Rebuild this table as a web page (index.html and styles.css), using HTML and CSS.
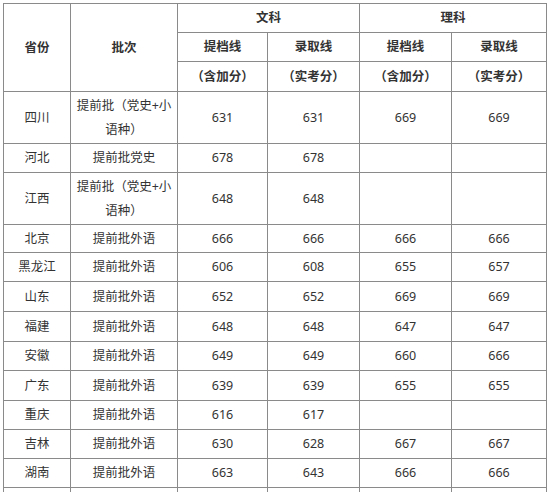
FILE: index.html
```html
<!DOCTYPE html>
<html lang="zh-CN">
<head>
<meta charset="utf-8">
<title>录取分数线</title>
<link rel="stylesheet" href="styles.css">
</head>
<body>
<table class="score-table">
  <colgroup>
    <col class="c-prov">
    <col class="c-batch">
    <col class="c-num1">
    <col class="c-num2">
    <col class="c-num3">
    <col class="c-num4">
  </colgroup>
  <thead>
    <tr class="h1">
      <th rowspan="3">省份</th>
      <th rowspan="3">批次</th>
      <th colspan="2">文科</th>
      <th colspan="2">理科</th>
    </tr>
    <tr class="h2">
      <th>提档线</th>
      <th>录取线</th>
      <th>提档线</th>
      <th>录取线</th>
    </tr>
    <tr class="h3">
      <th>（含加分）</th>
      <th>（实考分）</th>
      <th>（含加分）</th>
      <th>（实考分）</th>
    </tr>
  </thead>
  <tbody>
    <tr class="r-double"><td>四川</td><td class="batch">提前批（党史+小语种）</td><td>631</td><td>631</td><td>669</td><td>669</td></tr>
    <tr class="r29"><td>河北</td><td>提前批党史</td><td>678</td><td>678</td><td></td><td></td></tr>
    <tr class="r-double"><td>江西</td><td class="batch">提前批（党史+小语种）</td><td>648</td><td>648</td><td></td><td></td></tr>
    <tr class="r28"><td>北京</td><td>提前批外语</td><td>666</td><td>666</td><td>666</td><td>666</td></tr>
    <tr class="r29"><td>黑龙江</td><td>提前批外语</td><td>606</td><td>608</td><td>655</td><td>657</td></tr>
    <tr class="r30"><td>山东</td><td>提前批外语</td><td>652</td><td>652</td><td>669</td><td>669</td></tr>
    <tr class="r30"><td>福建</td><td>提前批外语</td><td>648</td><td>648</td><td>647</td><td>647</td></tr>
    <tr class="r29"><td>安徽</td><td>提前批外语</td><td>649</td><td>649</td><td>660</td><td>666</td></tr>
    <tr class="r30"><td>广东</td><td>提前批外语</td><td>639</td><td>639</td><td>655</td><td>655</td></tr>
    <tr class="r29"><td>重庆</td><td>提前批外语</td><td>616</td><td>617</td><td></td><td></td></tr>
    <tr class="r29"><td>吉林</td><td>提前批外语</td><td>630</td><td>628</td><td>667</td><td>667</td></tr>
    <tr class="r29"><td>湖南</td><td>提前批外语</td><td>663</td><td>643</td><td>666</td><td>666</td></tr>
    <tr class="r29"><td></td><td></td><td></td><td></td><td></td><td></td></tr>
  </tbody>
</table>
</body>
</html>
```

FILE: styles.css
```css
html, body {
  margin: 0;
  padding: 0;
  background: #ffffff;
  overflow: hidden;
}

body {
  padding: 3px 0 0 3px;
  font-family: "Noto Sans", "Noto Sans CJK SC", sans-serif;
  font-size: 12.5px;
  color: #333333;
  text-spacing-trim: space-all;
}

.score-table {
  border-collapse: collapse;
  table-layout: fixed;
  width: 544px;
}

.c-prov { width: 67px; }
.c-batch { width: 107px; }
.c-num1 { width: 90px; }
.c-num2 { width: 92px; }
.c-num3 { width: 92px; }
.c-num4 { width: 95px; }

.score-table th,
.score-table td {
  border: 1px solid #8a8a8a;
  text-align: center;
  vertical-align: middle;
  padding: 0 2px;
  line-height: 18px;
  text-spacing-trim: space-all;
}

.score-table th {
  font-weight: bold;
  color: #333333;
}

.h1 { height: 29px; }
.h2 { height: 29px; }
.h3 { height: 30px; }

.r-double { height: 52px; }
.r28 { height: 28px; }
.r29 { height: 29px; }
.r30 { height: 30px; }

.score-table td.batch {
  line-height: 24px;
}
```
